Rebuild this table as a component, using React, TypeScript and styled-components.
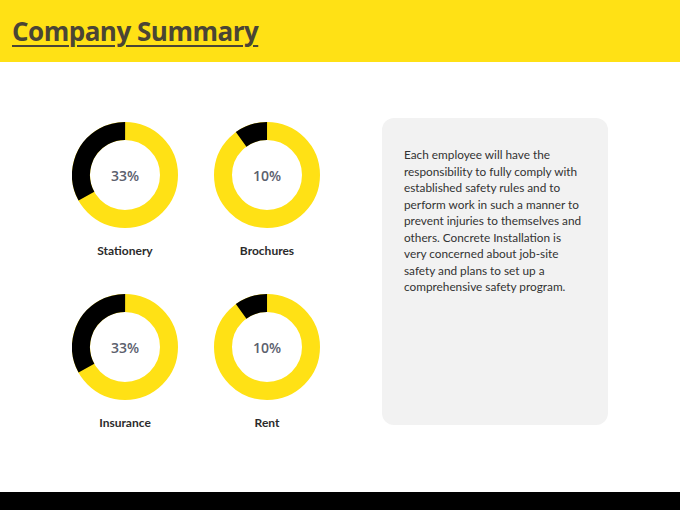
import styled, { createGlobalStyle } from "styled-components";

const GlobalStyle = createGlobalStyle`
  html, body {
    margin: 0;
    padding: 0;
    background: #ffffff;
  }
  body {
    font-family: "Open Sans", "Noto Sans", sans-serif;
  }
`;

const YELLOW = "#ffe115";

const Page = styled.div`
  width: 680px;
  height: 510px;
  display: flex;
  flex-direction: column;
  overflow: hidden;
`;

const Header = styled.header`
  height: 62px;
  background: ${YELLOW};
  display: flex;
  align-items: center;
  padding-left: 12px;
`;

const Title = styled.h1`
  margin: 0;
  font-size: 26px;
  font-weight: 700;
  color: #4a4535;
  text-decoration: underline;
  text-decoration-thickness: 2px;
  text-underline-offset: 4px;
  letter-spacing: -0.5px;
`;

const Main = styled.main`
  flex: 1;
  display: flex;
  align-items: flex-start;
  padding: 56px 0 0 72px;
  gap: 62px;
`;

const ChartGrid = styled.div`
  margin-top: 4px;
  display: grid;
  grid-template-columns: repeat(2, 106px);
  column-gap: 36px;
  row-gap: 35px;
`;

const ChartCell = styled.div`
  display: flex;
  flex-direction: column;
  align-items: center;
  gap: 15px;
`;

const DonutWrap = styled.div`
  position: relative;
  width: 106px;
  height: 106px;
`;

const Percent = styled.span`
  position: absolute;
  inset: 0;
  display: flex;
  align-items: center;
  justify-content: center;
  font-size: 14px;
  font-weight: 600;
  color: #5b606d;
`;

const Label = styled.span`
  font-family: "Lato", "Open Sans", sans-serif;
  font-size: 12px;
  font-weight: 700;
  line-height: 16px;
  color: #2b2b2b;
`;

const InfoBox = styled.div`
  width: 226px;
  height: 307px;
  box-sizing: border-box;
  background: #f2f2f2;
  border-radius: 12px;
  padding: 29px 12px 0 22px;
`;

const InfoText = styled.p`
  margin: 0;
  font-family: "Lato", "Open Sans", sans-serif;
  font-size: 11.8px;
  line-height: 16.5px;
  color: #333333;
  white-space: nowrap;
`;

const Footer = styled.footer`
  height: 18px;
  background: #000000;
`;

const Donut = ({ pct }: { pct: number }) => {
  const r = 44;
  const c = 2 * Math.PI * r;
  const rotate = -90 - pct * 360;
  return (
    <DonutWrap>
      <svg width="106" height="106" viewBox="0 0 106 106">
        <circle cx="53" cy="53" r={r} fill="none" stroke={YELLOW} strokeWidth="18" />
        <circle
          cx="53"
          cy="53"
          r={r}
          fill="none"
          stroke="#000000"
          strokeWidth="18"
          strokeDasharray={`${pct * c} ${c}`}
          transform={`rotate(${rotate} 53 53)`}
        />
      </svg>
      <Percent>{Math.round(pct * 100)}%</Percent>
    </DonutWrap>
  );
};

const charts = [
  { label: "Stationery", pct: 0.33 },
  { label: "Brochures", pct: 0.1 },
  { label: "Insurance", pct: 0.33 },
  { label: "Rent", pct: 0.1 },
];

const lines = [
  "Each employee will have the",
  "responsibility to fully comply with",
  "established safety rules and to",
  "perform work in such a manner to",
  "prevent injuries to themselves and",
  "others. Concrete Installation is",
  "very concerned about job-site",
  "safety and plans to set up a",
  "comprehensive safety program.",
];

const App = () => (
  <Page>
    <GlobalStyle />
    <Header>
      <Title>Company Summary</Title>
    </Header>
    <Main>
      <ChartGrid>
        {charts.map(({ label, pct }) => (
          <ChartCell key={label}>
            <Donut pct={pct} />
            <Label>{label}</Label>
          </ChartCell>
        ))}
      </ChartGrid>
      <InfoBox>
        <InfoText>
          {lines.map((line, i) => (
            <span key={i}>
              {line}
              {i < lines.length - 1 && <br />}
            </span>
          ))}
        </InfoText>
      </InfoBox>
    </Main>
    <Footer />
  </Page>
);

export default App;
